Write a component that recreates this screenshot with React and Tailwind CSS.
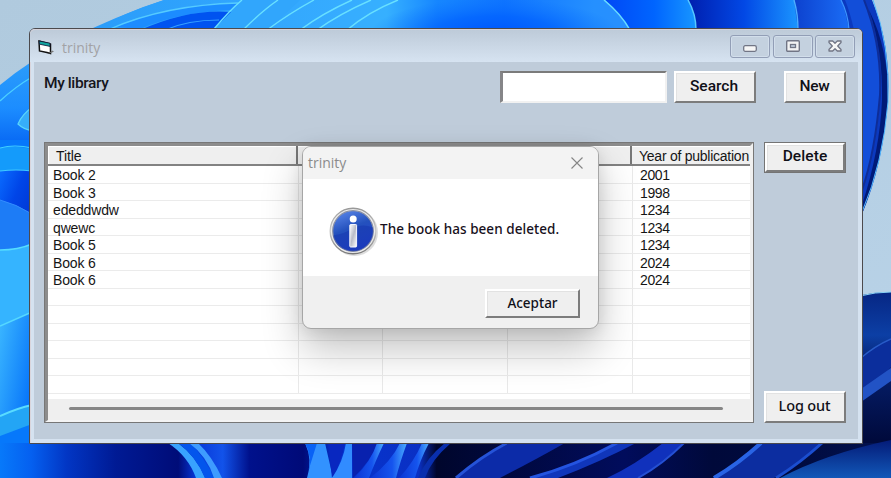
import React from "react";

const books = [
  ["Book 2", "2001"],
  ["Book 3", "1998"],
  ["ededdwdw", "1234"],
  ["qwewc", "1234"],
  ["Book 5", "1234"],
  ["Book 6", "2024"],
  ["Book 6", "2024"],
  ["", ""],
  ["", ""],
  ["", ""],
  ["", ""],
  ["", ""],
  ["", ""],
];

function Wallpaper() {
  return (
    <svg className="absolute inset-0" width="891" height="478" viewBox="0 0 891 478" aria-hidden="true">
      <defs>
        <linearGradient id="sky" x1="0" y1="0" x2="1" y2="1">
          <stop offset="0" stopColor="#b0cade" />
          <stop offset="1" stopColor="#b9d3e8" />
        </linearGradient>
        <linearGradient id="leftPetal" gradientUnits="userSpaceOnUse" x1="0" y1="60" x2="0" y2="140">
          <stop offset="0" stopColor="#2c9dfa" />
          <stop offset="0.6" stopColor="#1c8dff" />
          <stop offset="1" stopColor="#0a6cf5" />
        </linearGradient>
        <linearGradient id="topBand" gradientUnits="userSpaceOnUse" x1="90" y1="0" x2="650" y2="0">
          <stop offset="0" stopColor="#2a9cfa" />
          <stop offset="0.45" stopColor="#36acff" />
          <stop offset="0.53" stopColor="#36b0ff" />
          <stop offset="0.62" stopColor="#1686ff" />
          <stop offset="0.74" stopColor="#0f74ff" />
          <stop offset="0.9" stopColor="#2590ff" />
          <stop offset="1" stopColor="#2a90ff" />
        </linearGradient>
        <radialGradient id="topShade">
          <stop offset="0" stopColor="#0056ff" />
          <stop offset="0.5" stopColor="#0060ff" stopOpacity="0.7" />
          <stop offset="1" stopColor="#0a70ff" stopOpacity="0" />
        </radialGradient>
        <linearGradient id="p1" gradientUnits="userSpaceOnUse" x1="605" y1="0" x2="695" y2="0">
          <stop offset="0" stopColor="#0048f5" />
          <stop offset="0.55" stopColor="#0065ff" />
          <stop offset="1" stopColor="#1795ff" />
        </linearGradient>
        <linearGradient id="p2" gradientUnits="userSpaceOnUse" x1="690" y1="0" x2="798" y2="0">
          <stop offset="0" stopColor="#0020b0" />
          <stop offset="0.5" stopColor="#0248e5" />
          <stop offset="1" stopColor="#1b95ff" />
        </linearGradient>
        <linearGradient id="p3" gradientUnits="userSpaceOnUse" x1="795" y1="0" x2="848" y2="0">
          <stop offset="0" stopColor="#0d42cf" />
          <stop offset="1" stopColor="#1a6cf5" />
        </linearGradient>
        <linearGradient id="floor" gradientUnits="userSpaceOnUse" x1="0" y1="0" x2="891" y2="0">
          <stop offset="0" stopColor="#0779fa" />
          <stop offset="0.035" stopColor="#0560f0" />
          <stop offset="0.075" stopColor="#0236c4" />
          <stop offset="0.13" stopColor="#001a94" />
          <stop offset="0.2" stopColor="#000c78" />
          <stop offset="0.22" stopColor="#0737d8" />
          <stop offset="0.25" stopColor="#1253ea" />
          <stop offset="0.28" stopColor="#00118c" />
          <stop offset="0.34" stopColor="#000a78" />
          <stop offset="0.38" stopColor="#0534cf" />
          <stop offset="0.47" stopColor="#0a30c4" />
          <stop offset="0.49" stopColor="#00062c" />
          <stop offset="0.7" stopColor="#010c5c" />
          <stop offset="0.8" stopColor="#00093a" />
          <stop offset="0.9" stopColor="#000b40" />
          <stop offset="1" stopColor="#03134f" />
        </linearGradient>
        <linearGradient id="left3" x1="0" y1="0" x2="1" y2="1">
          <stop offset="0" stopColor="#0a6cff" />
          <stop offset="0.4" stopColor="#0045e8" />
          <stop offset="1" stopColor="#0030c8" />
        </linearGradient>
        <linearGradient id="left4" x1="0" y1="0" x2="1" y2="0.6">
          <stop offset="0" stopColor="#3cb8ff" />
          <stop offset="1" stopColor="#0a78fa" />
        </linearGradient>
        <linearGradient id="blade" x1="0" y1="0" x2="1" y2="0">
          <stop offset="0" stopColor="#0b35d3" />
          <stop offset="0.6" stopColor="#1554ee" />
          <stop offset="1" stopColor="#4aacff" />
        </linearGradient>
        <linearGradient id="rightFloor" x1="0" y1="0" x2="0" y2="1">
          <stop offset="0" stopColor="#041b78" />
          <stop offset="1" stopColor="#1258b8" />
        </linearGradient>
        <linearGradient id="rightSlope" gradientUnits="userSpaceOnUse" x1="0" y1="290" x2="0" y2="440">
          <stop offset="0" stopColor="#062582" />
          <stop offset="0.3" stopColor="#0c3fa5" />
          <stop offset="0.5" stopColor="#06206e" />
          <stop offset="1" stopColor="#000a3c" />
        </linearGradient>
      </defs>

      <rect width="891" height="478" fill="url(#sky)" />

      {/* left petals */}
      <path d="M0 85 Q60 35 164 0 H330 V150 H0Z" fill="url(#leftPetal)" />
      <path d="M0 101 Q15 87 32 77" fill="none" stroke="#4ccfff" strokeWidth="1.3" />
      <path d="M34 106 Q22 114 18 124 Q24 130 34 131Z" fill="#36aefa" stroke="#5bd6fb" strokeWidth="1.2" />
      <rect x="0" y="140" width="32" height="338" fill="#0678fb" />
      <path d="M0 148 Q14 145 32 149 V172 H0Z" fill="#149bfb" />
      <path d="M0 148 Q14 144 32 148" fill="none" stroke="#3fcfff" strokeWidth="1.2" />
      <path d="M0 171 Q16 169 32 171 V250 H0Z" fill="url(#left3)" />
      <path d="M0 171 Q16 169 32 171" fill="none" stroke="#40caff" strokeWidth="1.2" />
      <path d="M0 200 Q16 204 32 214 V245 Q18 249 0 250Z" fill="#1d7cf6" />
      <path d="M0 200 Q16 204 32 214" fill="none" stroke="#338cff" />
      <path d="M0 250 Q18 250 32 244 V312 L0 326Z" fill="#35b4ff" />
      <path d="M0 250 Q18 250 32 244" fill="none" stroke="#55ddff" strokeWidth="1.4" />
      <path d="M0 326 L32 312 V408 L0 418Z" fill="url(#left4)" />
      <path d="M0 326 L32 312" stroke="#55d8ff" strokeWidth="1.4" />
      <path d="M0 416 Q18 408 32 405 V424 L0 436Z" fill="#23a5f5" />
      <path d="M0 416 Q18 408 32 405" fill="none" stroke="#59dcff" strokeWidth="2" />

      {/* petals along the top edge */}
      <path d="M90 32 Q125 12 164 0 H650 V32Z" fill="url(#topBand)" />
      <path d="M116 27 Q175 3 238 3 L232 10 Q178 12 140 29Z" fill="#1c8cff" />
      <path d="M110 29 Q165 5 238 3" fill="none" stroke="#55cbff" strokeWidth="1.3" />
      <path d="M140 30 Q190 8 232 12 L213 30Z" fill="#0053f0" />
      <path d="M165 30 Q188 20 219 20" fill="none" stroke="#36a1ff" strokeWidth="1.2" />
      <path d="M214 29 L243 0 H300 L268 30Z" fill="#31a6fc" />
      <g fill="none" stroke="#68e0ff" strokeWidth="1.4">
        <path d="M214 29 Q230 10 242 0" />
        <path d="M243 30 Q262 11 278 0" />
        <path d="M267 30 Q290 13 314 0" />
        <path d="M300 30 Q323 13 352 0" />
        <path d="M317 30 Q339 14 371 0" />
        <path d="M347 30 Q368 12 398 0" />
      </g>
      <ellipse cx="495" cy="34" rx="125" ry="36" fill="url(#topShade)" />
      <path d="M605 0 H689 Q696 14 697 30 H630 Q621 14 605 0Z" fill="url(#p1)" />
      <path d="M604 0 Q621 14 630 30" fill="none" stroke="#68dbff" strokeWidth="1.5" />
      <path d="M688 0 H794 Q798 14 798 30 H696 Q696 14 688 0Z" fill="url(#p2)" />
      <path d="M688 0 Q696 14 696 30" fill="none" stroke="#57c8ff" strokeWidth="1.5" />
      <path d="M794 0 H842 Q849 14 849 30 H798Z" fill="url(#p3)" />
      <path d="M794 0 Q798 14 798 30" fill="none" stroke="#4caeff" strokeWidth="1.4" />
      <path d="M841 0 H872 Q891 45 888 100 Q883 165 862 214 V34 H849 Q847 15 841 0Z" fill="#0b39bf" />
      <path d="M841 0 Q848 14 849 30" fill="none" stroke="#3a94ff" strokeWidth="1.3" />
      <path d="M864 0 Q882 45 880 100 Q877 145 862 190 V30 H854 Q850 12 845 0Z" fill="#124ed9" />
      <path d="M864 0 Q882 45 880 95 Q875 153 862 190" fill="none" stroke="#0e2d98" strokeWidth="2" />
      <path d="M869 10 Q889 50 888 100 Q883 160 862 214 L862 205 Q880 150 882 100 Q883 50 869 10Z" fill="#011a78" />
      <path d="M873 0 Q890 45 888 102 Q883 163 862 212" fill="none" stroke="#52bbff" />

      {/* right slope */}
      <path d="M860 296 Q872 292 891 292 V478 H860Z" fill="url(#rightSlope)" />
      <path d="M860 296 Q875 292 891 292" fill="none" stroke="#8bd3f5" />
      <path d="M861 359 Q875 347 891 339 V367 L861 401Z" fill="#0b2e9c" />
      <path d="M861 358 Q875 346 891 339" fill="none" stroke="#285bc8" strokeWidth="1.5" />
      <path d="M861 389 L891 368 V381 L861 402Z" fill="#2253c5" />

      {/* bottom strip */}
      <rect x="0" y="443" width="891" height="35" fill="url(#floor)" />
      <path d="M168 443 Q188 456 196 478 H205 Q196 456 178 443Z" fill="#38a3ff" />
      <path d="M178 443 Q196 456 205 478 H214 Q204 456 190 443Z" fill="#0355ec" />
      <path d="M189 443 Q207 456 214 478 H222 Q212 456 198 443Z" fill="#3e9cff" />
      <path d="M305 443 Q313 460 307 478 H333 L325 443Z" fill="#3292ff" />
      <path d="M305 443 Q313 458 308 472 L317 443Z" fill="#0862f6" />
      <path d="M328 443 H345 Q341 464 332 478Z" fill="#0827c0" />
      <path d="M346 443 H352 V478 H332 Q343 462 346 443Z" fill="#318cff" />
      <path d="M352 443 H378 Q370 462 353 478Z" fill="#0821ae" />
      <path d="M377 443 H384 Q375 462 369 478 H354 Q371 462 377 443Z" fill="url(#blade)" />
      <path d="M400 443 H407 Q400 462 396 478 H370 Q391 462 400 443Z" fill="url(#blade)" />
      <path d="M422 443 H429 Q420 460 415 478 H399 Q414 462 422 443Z" fill="url(#blade)" />
      <path d="M445 443 Q426 458 418 478 H425 Q431 460 451 443Z" fill="#092fae" />
      <path d="M510 443 Q480 457 456 478 H500 Q535 460 565 443Z" fill="#0c2ba8" />
      <path d="M507 443 Q480 457 456 478" fill="none" stroke="#2553d8" strokeWidth="3" />
      <path d="M617 443 Q575 466 530 478 H558 Q600 462 636 443Z" fill="#1036bb" />
      <path d="M617 443 Q575 466 530 478" fill="none" stroke="#2454e0" strokeWidth="3" />
      <path d="M663 443 Q635 465 607 478 H638 Q660 464 684 443Z" fill="#1031bc" />
      <path d="M684 443 Q663 464 638 478" fill="none" stroke="#244fd4" strokeWidth="2" />
      <path d="M760 443 Q738 462 713 478 H774 Q800 463 822 443Z" fill="#0c2da0" />
      <path d="M761 443 Q738 464 714 478" fill="none" stroke="#2964e5" strokeWidth="4" />
      <path d="M822 443 Q800 463 776 478" fill="none" stroke="#1b4ed0" strokeWidth="3" />
      <path d="M780 478 Q825 454 891 440 V478Z" fill="url(#rightFloor)" />
    </svg>
  );
}

function ProgramIcon() {
  return (
    <svg width="17" height="15" viewBox="0 0 17 15" aria-hidden="true">
      <path d="M1 1 L12.5 4 V13.5 L9 12.5 L1.5 11Z" fill="#fff" stroke="#111" strokeWidth="1.5" />
      <path d="M1 1 L12 3.2 V6.4 L1.5 4.2Z" fill="#12a5a0" stroke="#113" strokeWidth="0.8" />
      <path d="M11 13.5 L14 10.5 L16 11.5 L13.5 12.8Z" fill="#777" />
    </svg>
  );
}

function CaptionButton({ children }) {
  return (
    <div className="flex h-[23px] w-10 items-center justify-center rounded-[3px] border border-[#929eb6] bg-[#c4d1df] shadow-[inset_0_0_0_1px_#d2deeb]">
      {children}
    </div>
  );
}

function RaisedButton({ className, children }) {
  return (
    <button className={"flex items-center justify-center border-2 border-t-white border-l-white border-r-[#7c7c7c] border-b-[#7c7c7c] bg-[#efefef] whitespace-nowrap text-[#101018] shadow-[inset_1px_1px_0_#e2e2e2] " + className}>
      {children}
    </button>
  );
}

function BookList() {
  return (
    <div className="h-[281px] w-[710px] border border-[#777]">
      <div className="flex h-[279px] flex-col border-t-3 border-r-3 border-b-2 border-l-3 border-t-[#8c8c8c] border-r-[#f0f0f0] border-b-[#f4f4f4] border-l-[#8c8c8c] bg-white font-['Liberation_Sans',sans-serif] text-[14px] text-[#151515]">
        <div className="flex h-5 shrink-0 overflow-hidden border-b-2 border-[#828282] bg-[#efefef] leading-[19px] whitespace-nowrap shadow-[inset_1px_1px_0_#fff]">
          <div className="w-[250px] shrink-0 border-r-2 border-[#777] pt-px pl-2 tracking-[-0.1px]">Title</div>
          <div className="w-[84px] shrink-0 border-r-2 border-[#777]" />
          <div className="w-[125px] shrink-0 border-r-2 border-[#777]" />
          <div className="w-[125px] shrink-0 border-r-2 border-[#777]" />
          <div className="pt-px pl-[7px] tracking-[-0.25px]">Year of publication</div>
        </div>
        <div className="h-[233px] overflow-hidden">
          {books.map(([title, year], i) => (
            <div key={i} className="flex h-[17.5px] border-b border-[#ebebeb] leading-[18px]">
              <div className="w-[251px] border-r border-[#e9e9e9] pl-[5px] tracking-[-0.15px]">{title}</div>
              <div className="w-[84px] border-r border-[#e9e9e9]" />
              <div className="w-[125px] border-r border-[#e9e9e9]" />
              <div className="w-[125px] border-r border-[#e9e9e9]" />
              <div className="pl-[7px] tracking-[-0.4px]">{year}</div>
            </div>
          ))}
        </div>
        <div className="flex flex-1 bg-[#efefef] pt-2 pl-[21px]">
          <div className="h-[3px] w-[654px] rounded-full bg-[#868686]" />
        </div>
      </div>
    </div>
  );
}

function InfoIcon() {
  return (
    <svg width="50" height="50" viewBox="0 0 50 50" aria-hidden="true">
      <defs>
        <linearGradient id="ball" x1="0.2" y1="0" x2="0.6" y2="1">
          <stop offset="0" stopColor="#5a86e8" />
          <stop offset="0.45" stopColor="#2451bd" />
          <stop offset="1" stopColor="#2340d0" />
        </linearGradient>
        <linearGradient id="ring" x1="0" y1="0" x2="0" y2="1">
          <stop offset="0" stopColor="#999" />
          <stop offset="0.5" stopColor="#c9c9c9" />
          <stop offset="1" stopColor="#777" />
        </linearGradient>
        <linearGradient id="stem" x1="0" y1="0" x2="1" y2="1">
          <stop offset="0" stopColor="#fff" />
          <stop offset="0.5" stopColor="#b9bcc8" />
          <stop offset="1" stopColor="#fff" />
        </linearGradient>
      </defs>
      <circle cx="25.5" cy="25.5" r="23.5" fill="#777" opacity="0.25" />
      <circle cx="24" cy="24" r="22.8" fill="#ebebeb" stroke="url(#ring)" strokeWidth="1.4" />
      <circle cx="24" cy="24" r="20.3" fill="url(#ball)" stroke="#8b91a5" strokeWidth="1.2" />
      <path d="M4 28.5 Q16.5 26.5 25.5 20.5 Q33.5 16.5 44 20.5 A20.3 20.3 0 0 1 24 44.3 Q7.5 43.5 4 28.5Z" fill="#1637ad" opacity="0.55" />
      <circle cx="24.2" cy="12" r="3.5" fill="#fff" />
      <rect x="20.8" y="17.5" width="6.8" height="22.5" rx="0.8" fill="url(#stem)" stroke="#f4f6ff" />
    </svg>
  );
}

function MessageDialog() {
  return (
    <div className="absolute top-[146px] left-[302px] flex h-[183px] w-[297px] flex-col overflow-hidden rounded-[9px] border border-[#a6a6a6] bg-[#f0f0f0] shadow-[0_20px_40px_rgba(0,0,0,0.24),0_2px_16px_rgba(0,0,0,0.1)]">
      <div className="flex h-8 shrink-0 items-center justify-between bg-[#f3f3f3] pr-[15px] pl-[5px]">
        <span className="font-['Open_Sans',sans-serif] text-[14px] leading-5 text-[#8b8b8b]">trinity</span>
        <svg width="12" height="12" viewBox="0 0 12 12" aria-hidden="true">
          <path d="M0.5 0.5 L11.5 11.5 M11.5 0.5 L0.5 11.5" stroke="#858585" strokeWidth="1.1" />
        </svg>
      </div>
      <div className="flex h-[97px] shrink-0 items-start bg-white pt-7 pl-[26px]">
        <InfoIcon />
        <span className="mt-3 ml-px font-['Noto_Sans',sans-serif] text-[13.5px] leading-5 font-medium tracking-[0.05px] whitespace-nowrap text-[#171020]">The book has been deleted.</span>
      </div>
      <div className="flex justify-end pt-[13px] pr-[18px]">
        <RaisedButton className="h-[29px] w-[95px] pb-px font-['Noto_Sans',sans-serif] text-[13.5px] font-medium">Aceptar</RaisedButton>
      </div>
    </div>
  );
}

export default function App() {
  return (
    <div className="relative h-[478px] w-[891px] overflow-hidden pt-[28px] pl-[29px]">
      <Wallpaper />
      <div className="relative flex h-[416px] w-[834px] flex-col rounded-t-[6px] border border-[#4c4a4d] bg-[#d5e2f0] shadow-[inset_1px_1px_0_#d9d5dc]">
        <div className="flex h-[33px] shrink-0 items-start rounded-t-[5px] bg-gradient-to-b from-[#bdcad8] to-[#d6e3f1] pr-[7px] pl-2 shadow-[inset_0_1px_0_#d5d2da]">
          <div className="flex flex-1 items-center pt-[9px]">
            <ProgramIcon />
            <span className="ml-[7px] font-['Open_Sans',sans-serif] text-[14px] leading-[19px] text-[#a2a2a5]">trinity</span>
          </div>
          <div className="flex gap-[2.5px] pt-[6px]">
            <CaptionButton>
              <svg className="mt-[3px]" width="14" height="7" viewBox="0 0 14 7"><rect x="0.7" y="0.7" width="12.6" height="5.6" rx="1.5" fill="#f6f6f6" stroke="#717585" strokeWidth="1.3" /></svg>
            </CaptionButton>
            <CaptionButton>
              <svg className="-mt-px" width="14" height="12" viewBox="0 0 14 12"><rect x="0.7" y="0.7" width="12.6" height="10.6" rx="1" fill="#f3f3f3" stroke="#717585" strokeWidth="1.4" /><rect x="4.5" y="4.5" width="5" height="3" fill="#c4d1df" stroke="#717585" strokeWidth="1.3" /></svg>
            </CaptionButton>
            <CaptionButton>
              <svg className="-mt-px" width="14" height="12" viewBox="0 0 14 12"><path d="M1 1 H4.7 L7 3.3 L9.3 1 H13 V2.5 L9.7 6 L13 9.5 V11 H9.3 L7 8.7 L4.7 11 H1 V9.5 L4.3 6 L1 2.5Z" fill="#f6f6f6" stroke="#717585" strokeWidth="1.3" strokeLinejoin="round" /></svg>
            </CaptionButton>
          </div>
        </div>
        <div className="mx-1 flex h-[377px] flex-col bg-[#bfccda]">
          <div className="flex h-20 shrink-0 items-start pt-[9px] pl-[10px]">
            <h1 className="mt-[2px] w-[456px] font-['Roboto',sans-serif] text-[15.5px] leading-5 font-medium tracking-[-0.4px] text-[#15151c]">My library</h1>
            <input className="h-8 w-[167px] border-t-2 border-r-2 border-b-2 border-l-3 border-t-[#7b7b7b] border-r-[#f1f1f1] border-b-[#f1f1f1] border-l-[#858588] bg-white outline-none" aria-label="Search books" />
            <RaisedButton className="ml-[7px] h-8 w-[82px] pr-0.5 pb-px font-['Roboto',sans-serif] text-[15.5px] font-medium">Search</RaisedButton>
            <RaisedButton className="ml-[28px] h-8 w-[62px] pr-px pb-px font-['Roboto',sans-serif] text-[15.5px] font-medium tracking-[-0.2px]">New</RaisedButton>
          </div>
          <div className="flex gap-[10px] pl-[10px]">
            <BookList />
            <div className="flex h-[281px] flex-col justify-between">
              <div className="h-[31px] w-[82px] border border-[#747474]">
                <RaisedButton className="h-[29px] w-20 pb-px font-['Roboto',sans-serif] text-[15.5px] font-medium tracking-[0.1px]">Delete</RaisedButton>
              </div>
              <RaisedButton className="h-8 w-[82px] pr-px pb-[3px] font-['Noto_Sans',sans-serif] text-[14.5px] font-medium tracking-[-0.15px]">Log out</RaisedButton>
            </div>
          </div>
        </div>
      </div>
      <MessageDialog />
    </div>
  );
}
